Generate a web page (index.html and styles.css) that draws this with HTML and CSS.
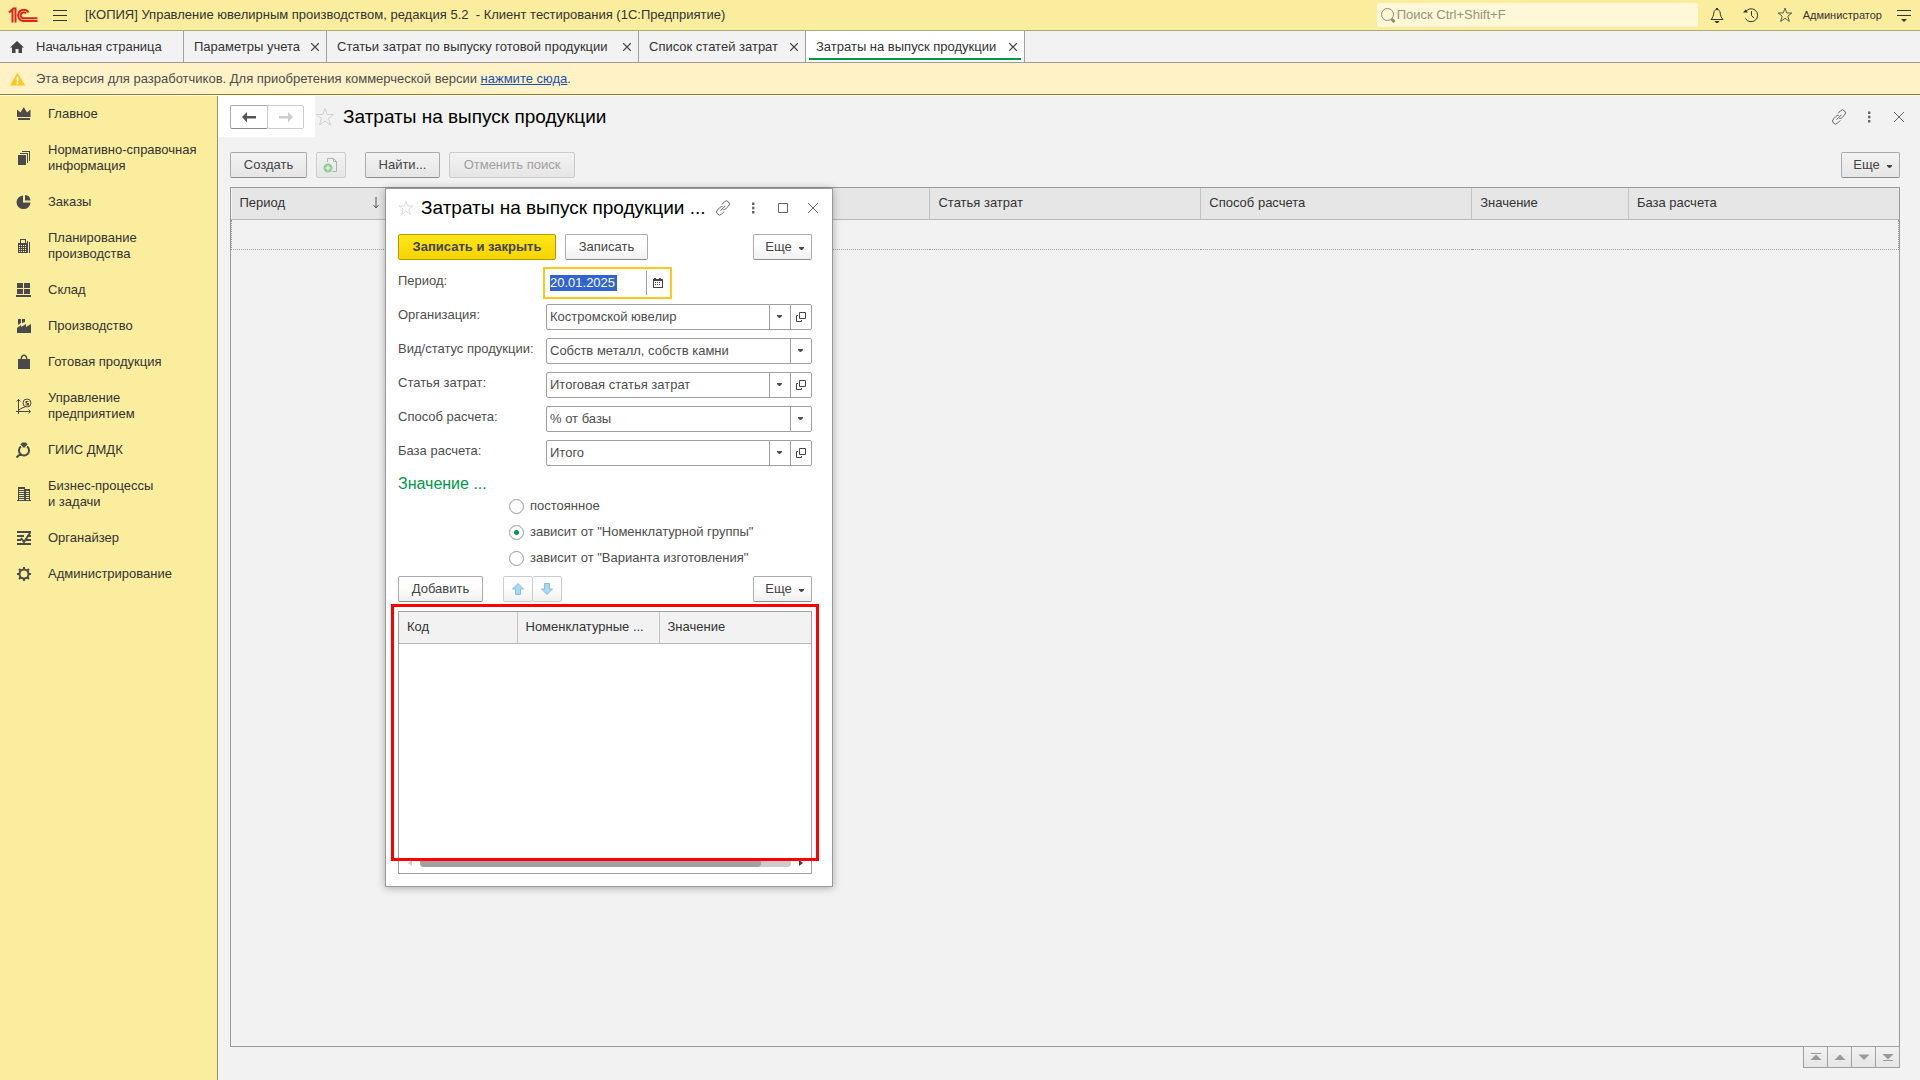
FILE: index.html
```html
<!DOCTYPE html>
<html lang="ru">
<head>
<meta charset="utf-8">
<title>Управление ювелирным производством</title>
<link rel="stylesheet" href="styles.css">
</head>
<body>
<svg class="defs" aria-hidden="true">
  <symbol id="i-link" viewBox="0 0 16 16"><path d="M7 4.500l2.300-2.600a2.800 2.800 0 0 1 4.200 0a2.900 2.900 0 0 1 0 4.200l-2.600 2.600q-1 1-2.600.8M9.200 11.500l-2.500 2.600a2.900 2.900 0 0 1-4.200 0a2.900 2.900 0 0 1 0-4.200l2.600-2.600q1-1 2.600-.8M5.500 10.700l5-5"/></symbol>
  <symbol id="i-dots" viewBox="0 0 16 16"><path class="solid" d="M7 2.500h2.400v2.400h-2.400zM7 6.800h2.400v2.400h-2.400zM7 11.100h2.400v2.400h-2.400z"/></symbol>
  <symbol id="i-close" viewBox="0 0 16 16"><path d="M3 3l10 10M13 3l-10 10"/></symbol>
  <symbol id="i-star" viewBox="0 0 20 20"><path d="M10 1.500l2.300 6h6.200l-5 3.900 1.900 6.600-5.400-3.900-5.400 3.900 1.900-6.600-5-3.900h6.200z"/></symbol>
  <symbol id="i-caret" viewBox="0 0 8 8"><path class="solid" d="M1 2h5v1l-2 2h-1l-2-2z"/></symbol>
  <symbol id="i-open" viewBox="0 0 12 12"><path d="M4.500 1.500h6v6h-6zM3 4.500h-1.500v6h5v-1.500"/></symbol>
</svg>

<header class="topbar">
  <svg class="logo" viewBox="0 0 30 16"><path d="M1 5.500l3.500-3v13M4.500 1.500h3v14"/><path d="M20.500 5.500a5.600 5.600 0 1 0-5.500 8.500h14.500M18 6.500a3 3 0 1 0-3 4.800h14.500"/></svg>
  <button class="icon-btn" aria-label="Меню"><svg class="ico" viewBox="0 0 16 16"><path d="M1 3.500h14M1 8.500h14M1 13.500h14"/></svg></button>
  <span class="app-title">[КОПИЯ] Управление ювелирным производством, редакция 5.2 &nbsp;- Клиент тестирования (1С:Предприятие)</span>
  <label class="search">
    <svg class="ico" viewBox="0 0 16 16"><circle cx="7.500" cy="7.500" r="6"/><path class="thick" d="M11.500 12l3 3"/></svg>
    <input type="search" placeholder="Поиск Ctrl+Shift+F" aria-label="Поиск">
  </label>
  <nav class="top-tools">
    <button class="icon-btn" aria-label="Оповещения"><svg class="ico" viewBox="0 0 16 16"><path d="M7 1.500h2M2 12.500c2-2 2.500-4 2.800-6.500.2-2 1.200-3.500 3.200-3.500s3 1.500 3.200 3.500c.3 2.500.8 4.500 2.800 6.500z"/><path class="solid" d="M5.500 14h5l-1.500 2h-2z"/></svg></button>
    <button class="icon-btn" aria-label="История"><svg class="ico" viewBox="0 0 16 16"><path d="M2.500 5a6.500 6.500 0 1 1 0 6.500M8.500 4v4.500l2.500 2.500"/><path class="solid" d="M0 5.500h5l-2.500-3z"/></svg></button>
    <button class="icon-btn" aria-label="Избранное"><svg class="ico"><use href="#i-star"/></svg></button>
    <a class="user" href="#">Администратор</a>
    <button class="icon-btn" aria-label="Сервис"><svg class="ico" viewBox="0 0 16 16"><path d="M1 3.500h14M1 8.500h14"/><path class="solid" d="M5 12h6l-3 3z"/></svg></button>
  </nav>
</header>

<nav class="tabs">
  <a class="tab home" href="#"><svg class="home-ico" viewBox="0 0 14 14"><path d="M7 1l7 6.500h-2v5.500h-3.500v-4h-3v4h-3.500v-5.500h-2z"/></svg>Начальная страница</a>
  <a class="tab" href="#">Параметры учета<svg class="x"><use href="#i-close"/></svg></a>
  <a class="tab long" href="#">Статьи затрат по выпуску готовой продукции<svg class="x"><use href="#i-close"/></svg></a>
  <a class="tab" href="#">Список статей затрат<svg class="x"><use href="#i-close"/></svg></a>
  <a class="tab active" href="#">Затраты на выпуск продукции<svg class="x"><use href="#i-close"/></svg></a>
</nav>

<div class="notice">
  <svg class="warn" viewBox="0 0 16 14"><path d="M8 0l8 14h-16z"/><path class="mark" d="M7 4.500h2v5h-2zM7 10.500h2v2h-2z"/></svg>
  <span>Эта версия для разработчиков. Для приобретения коммерческой версии <a href="#">нажмите сюда</a>.</span>
</div>

<div class="body">
  <nav class="sidebar">
    <a href="#"><svg viewBox="0 0 16 16"><path d="M1 3.500l3.500 3 3-5 .5 0 3 5 3.500-3v7.500h-13.500zM2 12h12v2h-12z"/></svg><span>Главное</span></a>
    <a href="#"><svg viewBox="0 0 16 16"><path d="M2 5h8v10h-8zM4 3h8v10h-1v-9h-7zM6 1h8v10h-1v-9h-7z"/></svg><span>Нормативно-справочная<br>информация</span></a>
    <a href="#"><svg viewBox="0 0 16 16"><path d="M7 1.500v7h7.500a7 6.800 0 1 1-7.500-7zM9 1a6 6 0 0 1 5.500 5.500h-5.500z"/></svg><span>Заказы</span></a>
    <a href="#"><svg viewBox="0 0 16 16"><path fill-rule="evenodd" d="M4 1h6v4h1v10h-9v-10h2zM5 2v3h4v-3zM3 7h1v1h-1zM5 7h1v1h-1zM7 7h1v1h-1zM9 7h1v1h-1zM3 9h1v1h-1zM5 9h1v1h-1zM7 9h1v1h-1zM9 9h1v1h-1zM3 11h1v1h-1zM5 11h1v1h-1zM7 11h1v1h-1zM9 11h1v1h-1zM3 13h1v1h-1zM5 13h1v1h-1zM7 13h1v1h-1zM9 13h1v1h-1zM11 3h1v12h-1zM13 4h1v11h-1z"/></svg><span>Планирование<br>производства</span></a>
    <a href="#"><svg viewBox="0 0 16 16"><path d="M1 1h6v5h-6zM8 1h6v5h-6zM1 7h6v5h-6zM8 7h6v5h-6zM0 13h15v2h-15z"/></svg><span>Склад</span></a>
    <a href="#"><svg viewBox="0 0 16 16"><path d="M1 15v-5l4-3v2l5-3v3l5-3v9zM2 1h3v4l-3 2zM6 1h3v3l-3 1z"/></svg><span>Производство</span></a>
    <a href="#"><svg viewBox="0 0 16 16"><path d="M2 5h2.500c0-6 7-6 7 0h2.500v10h-12zM6 5h4c0-4-4-4-4 0z" fill-rule="evenodd"/></svg><span>Готовая продукция</span></a>
    <a href="#"><svg viewBox="0 0 16 16"><path class="line" d="M2.500 1v15M0 13.500h14M3 12l3-2 3-1M.5 3.500l2-2 2 2M12.500 11.500l2 2-2 2"/><circle class="line" cx="11" cy="5" r="4"/><path d="M9.500 3h3v1h-1.500v1h2v2.500h-3.500v-1h1.500v-1h-1.500z"/></svg><span>Управление<br>предприятием</span></a>
    <a href="#"><svg viewBox="0 0 16 16"><path class="line bold" d="M5 4.500a5 5 0 1 0 6 0M4.500 12l-4 3.500"/><path d="M6 .5h4l1.500 2-3.500 3.500-3.500-3.500z"/></svg><span>ГИИС ДМДК</span></a>
    <a href="#"><svg viewBox="0 0 16 16"><path fill-rule="evenodd" d="M2 1h7v2h5v11h1v1h-14v-1h1zM3 3v1h5v-1zM3 5v1h5v-1zM3 7v1h5v-1zM3 9v1h5v-1zM3 11v1h5v-1zM3 13v1h5v-1zM10 5v1h3v-1zM10 7v1h3v-1zM10 9v1h3v-1zM10 11v1h3v-1zM10 13v1h3v-1z"/></svg><span>Бизнес-процессы<br>и задачи</span></a>
    <a href="#"><svg viewBox="0 0 16 16"><path class="line bold" d="M1 2h14M1 6h7M11 6h4M1 10h4M10 10h5M1 14h14M5 8l3 4 6-9"/></svg><span>Органайзер</span></a>
    <a href="#"><svg viewBox="0 0 16 16"><circle class="line bold" cx="8" cy="8" r="4.500"/><path class="line bold" d="M8 1v2.500M8 12.500v2.500M1 8h2.500M12.500 8h2.500M3 3l2 2M11 11l2 2M3 13l2-2M11 5l2-2"/></svg><span>Администрирование</span></a>
  </nav>

  <main class="page">
    <div class="page-head">
      <div class="history">
        <button class="btn" aria-label="Назад"><svg viewBox="0 0 16 12"><path d="M1 6l5-5v4h9v2.500h-9v4z"/></svg></button><button class="btn" aria-label="Вперед" disabled><svg viewBox="0 0 16 12"><path d="M15 6l-5-5v4h-9v2.500h9v4z"/></svg></button>
      </div>
      <svg class="fav"><use href="#i-star"/></svg>
      <h1>Затраты на выпуск продукции</h1>
      <div class="head-tools">
        <button class="icon-btn" aria-label="Ссылка"><svg class="ico"><use href="#i-link"/></svg></button>
        <button class="icon-btn" aria-label="Действия"><svg class="ico"><use href="#i-dots"/></svg></button>
        <button class="icon-btn" aria-label="Закрыть"><svg class="ico"><use href="#i-close"/></svg></button>
      </div>
    </div>

    <div class="toolbar">
      <button class="btn create">Создать</button>
      <button class="btn copy" aria-label="Скопировать" disabled><svg viewBox="0 0 16 16"><path class="sheet" d="M4.500 5v-3.500h6l3 3v10h-4M10.500 1.500v3h3"/><circle cx="5" cy="11" r="4.500"/><path class="plus" d="M5 8.500v5M2.500 11h5"/></svg></button>
      <button class="btn find">Найти...</button>
      <button class="btn cancel" disabled>Отменить поиск</button>
      <button class="btn more">Еще<svg><use href="#i-caret"/></svg></button>
    </div>

    <div class="list">
      <table>
        <colgroup><col class="narrow"><col class="wide"><col class="wide"><col class="wide"><col class="wide"><col class="narrow"><col></colgroup>
        <thead><tr><th><span class="sort">Период<svg viewBox="0 0 8 12"><path d="M4 0v11M1.500 8l2.500 3 2.500-3"/></svg></span></th><th></th><th></th><th>Статья затрат</th><th>Способ расчета</th><th>Значение</th><th>База расчета</th></tr></thead>
        <tbody><tr><td colspan="7"></td></tr></tbody>
      </table>
    </div>
    <div class="pager">
      <button aria-label="В начало"><svg viewBox="0 0 12 8"><path d="M1 0h10v1h-10zM6 1.500l5.500 5.500h-11z"/></svg></button>
      <button aria-label="Выше"><svg viewBox="0 0 12 8"><path d="M6 1.500l5.500 5.500h-11z"/></svg></button>
      <button aria-label="Ниже"><svg viewBox="0 0 12 8"><path d="M6 7l5.500-5.500h-11z"/></svg></button>
      <button aria-label="В конец"><svg viewBox="0 0 12 8"><path d="M6 6.500l5.500-5.500h-11zM1 7h10v1h-10z"/></svg></button>
    </div>

    <section class="dialog" role="dialog" aria-labelledby="dlg-title">
      <div class="dlg-head">
        <svg class="fav"><use href="#i-star"/></svg>
        <h2 id="dlg-title">Затраты на выпуск продукции ...</h2>
        <div class="head-tools">
          <button class="icon-btn" aria-label="Ссылка"><svg class="ico"><use href="#i-link"/></svg></button>
          <button class="icon-btn" aria-label="Действия"><svg class="ico"><use href="#i-dots"/></svg></button>
          <button class="icon-btn" aria-label="Развернуть"><svg class="ico" viewBox="0 0 16 16"><path d="M3.500 3.500h9v9h-9z"/></svg></button>
          <button class="icon-btn" aria-label="Закрыть"><svg class="ico"><use href="#i-close"/></svg></button>
        </div>
      </div>
      <div class="toolbar">
        <button class="btn primary">Записать и закрыть</button>
        <button class="btn save">Записать</button>
        <button class="btn more">Еще<svg><use href="#i-caret"/></svg></button>
      </div>

      <div class="form">
        <label for="period">Период:</label>
        <div class="field date"><input id="period" type="text" value="20.01.2025"><button aria-label="Календарь"><svg viewBox="0 0 12 12"><path fill-rule="evenodd" d="M1 2h1v-1h2v1h3v-1h2v1h2v9h-10zM2 4v6h8v-6zM3 5h1v1h-1zM5 5h1v1h-1zM7 5h1v1h-1zM3 7h1v1h-1zM5 7h1v1h-1zM7 7h1v1h-1z"/></svg></button></div>
        <label for="org">Организация:</label>
        <div class="field open"><select id="org"><option>Костромской ювелир</option></select><span class="arrow"><svg><use href="#i-caret"/></svg></span><button aria-label="Открыть"><svg><use href="#i-open"/></svg></button></div>
        <label for="kind">Вид/статус продукции:</label>
        <div class="field"><select id="kind"><option>Собств металл, собств камни</option></select><span class="arrow"><svg><use href="#i-caret"/></svg></span></div>
        <label for="item">Статья затрат:</label>
        <div class="field open"><select id="item"><option>Итоговая статья затрат</option></select><span class="arrow"><svg><use href="#i-caret"/></svg></span><button aria-label="Открыть"><svg><use href="#i-open"/></svg></button></div>
        <label for="method">Способ расчета:</label>
        <div class="field"><select id="method"><option>% от базы</option></select><span class="arrow"><svg><use href="#i-caret"/></svg></span></div>
        <label for="base">База расчета:</label>
        <div class="field open"><select id="base"><option>Итого</option></select><span class="arrow"><svg><use href="#i-caret"/></svg></span><button aria-label="Открыть"><svg><use href="#i-open"/></svg></button></div>
      </div>

      <h3>Значение ...</h3>
      <div class="radios">
        <label><input type="radio" name="mode">постоянное</label>
        <label><input type="radio" name="mode" checked>зависит от "Номенклатурной группы"</label>
        <label><input type="radio" name="mode">зависит от "Варианта изготовления"</label>
      </div>

      <div class="toolbar">
        <button class="btn add">Добавить</button>
        <div class="move">
          <button class="btn" aria-label="Вверх" disabled><svg viewBox="0 0 12 12"><path d="M6 .5l5.500 5.500h-3v5.500h-5v-5.500h-3z"/></svg></button><button class="btn" aria-label="Вниз" disabled><svg viewBox="0 0 12 12"><path d="M6 11.500l5.500-5.500h-3v-5.500h-5v5.500h-3z"/></svg></button>
        </div>
        <button class="btn more">Еще<svg><use href="#i-caret"/></svg></button>
      </div>

      <div class="values">
        <table>
          <colgroup><col class="code"><col class="group"><col></colgroup>
          <thead><tr><th>Код</th><th>Номенклатурные ...</th><th>Значение</th></tr></thead>
        </table>
        <div class="scroll">
          <svg viewBox="0 0 4 6"><path class="off" d="M4 0v6l-4-3z"/></svg>
          <div class="track"><div class="thumb"></div></div>
          <svg viewBox="0 0 4 6"><path d="M0 0v6l4-3z"/></svg>
        </div>
        <div class="highlight"></div>
      </div>
    </section>
  </main>
</div>
</body>
</html>
```
FILE: styles.css
```css
:root {
  --yellow: #fbed9e;
  --line: #a0a0a0;
  --bg: #f2f2f2;
  --text: #333;
  --field-text: #4d4d4d;
}
* { box-sizing: border-box; }
body {
  margin: 0;
  min-height: 100vh;
  display: flex;
  flex-direction: column;
  background: var(--bg);
  color: var(--text);
  font: 13px/16px "Liberation Sans", Arial, sans-serif;
}
button, input, select { font: inherit; color: inherit; margin: 0; }
button { cursor: pointer; }
h1, h2, h3 { margin: 0; font-weight: normal; }
svg { display: block; flex: none; }
table { width: 100%; border-collapse: collapse; table-layout: fixed; }
.defs { position: absolute; width: 0; height: 0; }
.ico { width: 16px; height: 16px; fill: none; stroke: currentColor; stroke-width: 1; }
.solid { fill: currentColor; stroke: none; }
.icon-btn { display: flex; padding: 0; border: 0; background: none; }

/* Top bar */
.topbar {
  display: flex;
  align-items: center;
  height: 31px;
  padding: 0 8px;
  background: var(--yellow);
  border-bottom: 1px solid #b0aa72;
}
.logo { width: 30px; height: 16px; margin-right: 14px; fill: none; stroke: #d9261c; stroke-width: 2; }
.app-title { margin-left: 17px; flex: 1; white-space: nowrap; }
.search {
  display: flex;
  align-items: center;
  width: 321px;
  height: 24px;
  padding-left: 3px;
  gap: 1px;
  background: #fef8d8;
  border-radius: 2px;
  color: #8c8a78;
}
.search input { flex: 1; min-width: 0; padding: 0; border: 0; background: none; outline: 0; }
.search input::placeholder { color: #96937d; }
.thick { stroke-width: 3; }
.top-tools { display: flex; align-items: center; gap: 18px; margin-left: 11px; }
.user { font-size: 11px; color: inherit; text-decoration: none; margin: 0 -4px 0 -8px; }

/* Tabs */
.tabs { display: flex; height: 32px; border-bottom: 1px solid #9c9c9c; }
.tab {
  display: flex;
  align-items: center;
  min-width: 143px;
  padding: 0 5px 0 10px;
  border-right: 1px solid var(--line);
  color: inherit;
  text-decoration: none;
  white-space: nowrap;
}
.tab.home { min-width: 184px; }
.tab.long { min-width: 312px; }
.tab:nth-child(4) { min-width: 167px; }
.tab.active { min-width: 219px; }
.home-ico { width: 14px; height: 14px; margin-right: 12px; fill: #444; }
.tab.active { background: linear-gradient(#00984a, #00984a) 3px 27px / calc(100% - 6px) 2px no-repeat #fff; }
.x { width: 12px; height: 12px; margin-left: auto; fill: none; stroke: #444; stroke-width: 1.5; }

/* Notice */
.notice {
  display: flex;
  align-items: center;
  gap: 11px;
  height: 32px;
  padding: 0 10px;
  background: #fff2c6;
  border-bottom: 1px solid #997b20;
  color: #4d4d4d;
}
.notice a { color: #1a4fae; }
.warn { width: 15px; height: 14px; fill: #fcc81e; }
.mark { fill: #fff; }

/* Sidebar */
.body { flex: 1; display: flex; border-top: 1px solid #fff; }
.sidebar { flex: none; width: 218px; background: var(--yellow); border-right: 1px solid #9a9164; }
.sidebar a {
  display: flex;
  align-items: center;
  gap: 16px;
  padding: 10px 10px 10px 16px;
  color: inherit;
  text-decoration: none;
}
.sidebar svg { width: 16px; height: 16px; fill: #4a4a4a; }
.sidebar .line { fill: none; stroke: #4a4a4a; }
.sidebar .bold { stroke-width: 2; }

/* Page */
.page { flex: 1; min-width: 0; position: relative; display: flex; flex-direction: column; padding-right: 20px; }
.page-head { display: flex; align-items: center; height: 41px; }
.history { display: flex; align-items: center; height: 41px; padding: 0 11px 0 12px; background: #fff; }
.history .btn { width: 38px; height: 24px; padding: 0; background: #fff; }
.history .btn + .btn { width: 37px; margin-left: -1px; }
.history svg { width: 16px; height: 12px; fill: #555; }
.history .btn:disabled svg { fill: #ccc; }
.fav { width: 20px; height: 20px; fill: none; stroke: #d2d2d2; }
h1, h2 { color: #000; font-size: 19px; line-height: 24px; white-space: nowrap; }
h1 { margin-left: 8px; }
.head-tools { display: flex; gap: 14px; margin-left: auto; color: #666; }
.page-head .head-tools { margin-right: -7px; }

.btn {
  display: flex;
  align-items: center;
  justify-content: center;
  height: 26px;
  padding: 0 12px;
  background: linear-gradient(#fff0, #0000000d);
  border: 1px solid #ababab;
  border-bottom-color: #8c8c8c;
  border-radius: 2px;
  color: #444;
  white-space: nowrap;
}
.btn:disabled { border-color: #ccc; color: #a0a0a0; }
.btn.primary {
  min-width: 158px;
  background: linear-gradient(#ffe61a, #f5d500);
  border-color: #b59c00;
  font-weight: bold;
}
.create { min-width: 77px; }
.find { min-width: 75px; margin-left: 10px; }
.cancel { min-width: 126px; }
.save { min-width: 83px; }
.add { min-width: 85px; }
.more { width: 59px; padding: 0 6px 0 12px; margin-left: auto; gap: 6px; }
.more svg { width: 8px; height: 8px; margin-top: 3px; }
.toolbar { display: flex; gap: 9px; }
.page > .toolbar { padding: 15px 0 9px 12px; }
.copy { width: 30px; padding: 0; }
.copy svg { width: 16px; height: 16px; fill: #93cc9c; }
.copy .sheet { fill: none; stroke: #aab2bb; }
.copy .plus { stroke: #fff; stroke-width: 1; }

.list { flex: 1; margin-left: 12px; border: 1px solid #999; }
th { height: 31px; padding: 0 8px; text-align: left; font-weight: normal; white-space: nowrap; border-bottom: 1px solid #b8b8b8; }
th + th { border-left: 1px solid #c4c4c4; }
.list th { background: #e6e6e6; }
.list td { height: 30px; border: 1px dotted #999; }
.narrow { width: 9.4%; }
.wide { width: 16.25%; }
.sort { display: flex; justify-content: space-between; align-items: center; }
.sort svg { width: 8px; height: 12px; fill: none; stroke: #555; }

.pager { display: flex; justify-content: flex-end; height: 33px; }
.pager button {
  display: grid;
  place-items: center;
  width: 25px;
  height: 22px;
  margin: -1px 0 0 -1px;
  padding: 0;
  border: 1px solid #a0a0a0;
  background: linear-gradient(#f2f2f2, #e6e6e6);
}
.pager svg { width: 12px; height: 8px; fill: #999; }

/* Dialog */
.dialog {
  position: absolute;
  top: 92px;
  left: 167px;
  width: 448px;
  padding: 0 20px 12px 12px;
  background: #fff;
  border: 1px solid #999;
  box-shadow: 0 1px 8px #0000004d;
}
.dialog .btn { background: linear-gradient(#fff 40%, #f0f0f0); }
.dialog .btn.primary { background: linear-gradient(#ffe61a, #f5d500); }
.dlg-head { display: flex; align-items: center; height: 45px; padding-bottom: 7px; }
.dlg-head .fav { width: 16px; height: 16px; }
h2 { margin-left: 7px; }
.dlg-head .head-tools { margin-right: -9px; }
.form { display: grid; grid-template-columns: 148px 1fr; gap: 8px 0; padding: 10px 0 6px; color: var(--field-text); }
.form > label { padding-top: 3px; }
.field {
  display: grid;
  grid-template-columns: 1fr 21px;
  height: 26px;
  border: 1px solid var(--line);
  border-radius: 2px;
}
.field.open { grid-template-columns: 1fr 21px 21px; }
.field select {
  grid-area: 1 / 1 / 2 / 3;
  min-width: 0;
  padding: 0 24px 0 3px;
  border: 0;
  background: none;
  appearance: none;
}
.arrow { grid-area: 1 / 2; pointer-events: none; }
.arrow, .field button {
  display: grid;
  place-items: center;
  padding: 0;
  border: 0;
  border-left: 1px solid var(--line);
  background: none;
}
.arrow svg { width: 8px; height: 8px; }
.field button svg { width: 12px; height: 12px; fill: none; stroke: #444; }
.field.date {
  width: 123px;
  grid-template-columns: 1fr 22px;
  align-items: center;
  border-color: transparent;
  border-radius: 0;
  outline: 2px solid #fcc81e;
  outline-offset: 1px;
}
.date input {
  width: 67px;
  height: 16px;
  margin-left: 3px;
  padding: 0;
  border: 0;
  outline: 0;
  background: #3164d2;
  color: #fff;
}
.date button { height: 24px; }
.field.date button svg { fill: #444; stroke: none; }
h3 { padding-bottom: 2px; color: #00984a; font-size: 16px; line-height: 24px; }
.radios { display: flex; flex-direction: column; gap: 10px; padding: 0 0 10px 111px; color: var(--field-text); }
.radios label { display: flex; align-items: center; gap: 6px; }
.radios input {
  width: 15px;
  height: 15px;
  appearance: none;
  border: 1px solid #999;
  border-radius: 50%;
}
.radios input:checked { background: radial-gradient(#00984a 2px, #fff 3px); }
.move { display: flex; margin-left: 11px; }
.move .btn { width: 30px; padding: 0; }
.move .btn + .btn { margin-left: -1px; }
.move svg { width: 12px; height: 12px; fill: #a5daf5; stroke: #8dbbd2; }
.values { position: relative; display: flex; flex-direction: column; height: 263px; margin-top: 9px; border: 1px solid var(--line); }
.values th { background: var(--bg); }
.code { width: 118px; }
.group { width: 142px; }
.scroll { display: flex; align-items: center; gap: 8px; margin-top: auto; padding: 0 8px 6px 9px; }
.scroll svg { width: 4px; height: 6px; fill: #444; }
.scroll .off { fill: #ccc; }
.track { flex: 1; height: 8px; border-radius: 4px; background: #ccc; }
.thumb { width: 92%; height: 8px; border-radius: 4px; background: #a0a0a0; }
.highlight { position: absolute; inset: -8px -8px 12px -8px; border: 3px solid #f00; pointer-events: none; }
```
